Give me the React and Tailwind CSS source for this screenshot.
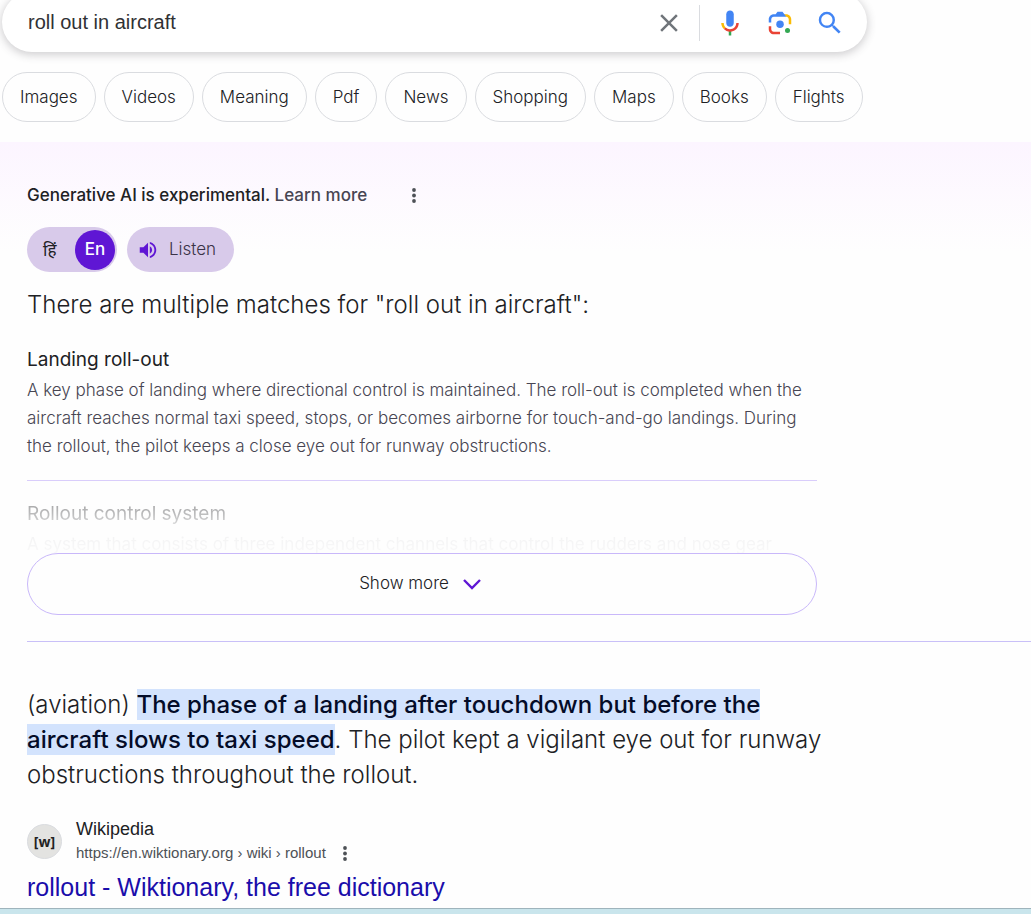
import React from "react";

const filters = ["Images", "Videos", "Meaning", "Pdf", "News", "Shopping", "Maps", "Books", "Flights"];

function CloseIcon() {
  return (
    <svg viewBox="0 0 24 24" className="size-[30px]" fill="#70757a" aria-hidden="true">
      <path d="M19 6.41L17.59 5 12 10.59 6.41 5 5 6.41 10.59 12 5 17.59 6.41 19 12 13.41 17.59 19 19 17.59 13.41 12z" />
    </svg>
  );
}

function MicIcon() {
  return (
    <svg viewBox="0 0 24 24" className="size-[30px]" aria-hidden="true">
      <path fill="#4285f4" d="M12 15c1.66 0 3-1.31 3-2.97V4.97C15 3.31 13.66 2 12 2S9 3.31 9 4.97v7.06C9 13.69 10.34 15 12 15z" />
      <path fill="#34a853" d="M11 18.08h2V22h-2z" />
      <path fill="#fbbc04" d="M7.05 16.87C5.78 15.59 5 13.87 5 12h2c0 1.37.56 2.6 1.46 3.5z" />
      <path fill="#ea4335" d="M12 16.93a4.97 4.97 0 0 1-3.54-1.43l-1.41 1.37C8.32 18.14 10.03 19 12 19c3.87 0 7-3.13 7-7h-2c0 2.8-2.24 4.93-5 4.93z" />
    </svg>
  );
}

function LensIcon() {
  return (
    <svg viewBox="0 0 192 192" className="size-[30px]" aria-hidden="true">
      <circle fill="#34a853" cx="144.07" cy="144" r="16" />
      <circle fill="#4285f4" cx="96.07" cy="104" r="24" />
      <path fill="#ea4335" d="M24 135.2c0 18.11 14.69 32.8 32.8 32.8H96v-16l-40.1-.1c-8.8 0-15.9-8.19-15.9-17.9v-18H24v19.2z" />
      <path fill="#fbbc04" d="M168 72.8c0-18.11-14.69-32.8-32.8-32.8H116l20 16c8.8 0 16 8.29 16 18v30h16V72.8z" />
      <path fill="#4285f4" d="M112 24l-32 0-12 16H56.8C38.69 40 24 54.69 24 72.8V92h16V74c0-9.71 7.2-18 16-18h80L124 40z" />
    </svg>
  );
}

function SearchIcon() {
  return (
    <svg viewBox="0 0 24 24" className="size-[30px]" fill="#4285f4" aria-hidden="true">
      <path d="M15.5 14h-.79l-.28-.27A6.471 6.471 0 0 0 16 9.5 6.5 6.5 0 1 0 9.5 16c1.61 0 3.09-.59 4.23-1.57l.27.28v.79l5 4.99L20.49 19l-4.99-5zm-6 0C7.01 14 5 11.99 5 9.5S7.01 5 9.5 5 14 7.01 14 9.5 11.99 14 9.5 14z" />
    </svg>
  );
}

function DotsIcon() {
  return (
    <svg viewBox="0 0 6 18" className="h-[18px] w-[6px]" fill="#4d5156" aria-hidden="true">
      <circle cx="3" cy="4" r="1.9" />
      <circle cx="3" cy="9.5" r="1.9" />
      <circle cx="3" cy="15" r="1.9" />
    </svg>
  );
}

function SpeakerIcon() {
  return (
    <svg viewBox="0 0 24 24" className="size-[22px]" fill="#5f16d4" aria-hidden="true">
      <path d="M3 9v6h4l5 5V4L7 9H3zm13.5 3A4.5 4.5 0 0 0 14 7.97v8.05A4.5 4.5 0 0 0 16.5 12zM14 3.23v2.06c2.89.86 5 3.54 5 6.71s-2.11 5.85-5 6.71v2.06c4.01-.91 7-4.49 7-8.77s-2.99-7.86-7-8.77z" />
    </svg>
  );
}

function WiktionaryLogo() {
  return (
    <span className="flex size-[35px] shrink-0 items-center justify-center rounded-full border border-[#dadce0] bg-[#e3e3e1] font-['Open_Sans',sans-serif] text-[14px] font-bold text-[#222222]" aria-hidden="true">
      [w]
    </span>
  );
}

export default function App() {
  return (
    <div className="overflow-x-hidden bg-[#fefefe] font-['Inter','Noto_Sans',sans-serif] font-light text-[#202124]">
      <header className="overflow-hidden pb-[20px] pl-[2px]">
        <form
          role="search"
          onSubmit={(e) => e.preventDefault()}
          className="-mt-2 flex h-[60px] max-w-[865px] items-center rounded-full bg-white pr-[22px] pl-[26px] shadow-[0_2px_8px_1px_rgba(64,60,67,0.24)]"
        >
          <input
            type="text"
            aria-label="Search"
            defaultValue="roll out in aircraft"
            className="min-w-0 flex-1 bg-transparent font-['Liberation_Sans',Arial,sans-serif] text-[20px] text-[#303134] outline-none"
          />
          <div className="flex items-center pt-[2px]">
            <button type="button" aria-label="Clear"><CloseIcon /></button>
            <span className="mx-[15px] h-[36px] w-px bg-[#dadce0]" />
            <div className="flex items-center gap-[20px]">
              <button type="button" aria-label="Search by voice"><MicIcon /></button>
              <button type="button" aria-label="Search by image"><LensIcon /></button>
              <button type="submit" aria-label="Search"><SearchIcon /></button>
            </div>
          </div>
        </form>
        <nav className="mt-[20px] flex flex-wrap gap-2">
          {filters.map((f) => (
            <a key={f} href="#" className="flex h-[50px] items-center rounded-full border border-[#dadce0] px-[17px] pt-[2px] text-[17px]">
              {f}
            </a>
          ))}
        </nav>
      </header>

      <main>
        <section className="bg-linear-to-b from-[#fcf5ff] to-[#fefefe] to-[110px] pt-[41px] pl-[27px]">
          <div className="flex items-center gap-[44px]">
            <p className="text-[17px] leading-[24px] font-medium">
              Generative AI is experimental. <a href="#" className="text-[#474552]">Learn more</a>
            </p>
            <button type="button" aria-label="More options"><DotsIcon /></button>
          </div>

          <div className="mt-[20px] flex gap-[10px] text-[17px]">
            <div className="flex h-[45px] w-[90px] items-center justify-between rounded-full bg-[#d8caea] pr-[2px] pl-[16px]">
              <button type="button" lang="hi" className="pt-[2px] font-normal">हिं</button>
              <button type="button" className="size-[40px] rounded-full bg-[#5f16d4] font-medium text-white">En</button>
            </div>
            <button type="button" className="flex h-[45px] items-center gap-[10px] rounded-full bg-[#d8caea] pr-[18px] pl-[10px] text-[#3b3347]">
              <SpeakerIcon />
              Listen
            </button>
          </div>

          <h2 className="mt-[16px] text-[24px] leading-[34px]">There are multiple matches for "roll out in aircraft":</h2>

          <div className="max-w-[790px]">
            <article className="mt-[24px] border-b border-[#d9cdfb] pb-[20px]">
              <h3 className="text-[19px] leading-[28px] font-normal">Landing roll-out</h3>
              <p className="mt-[2px] text-[17px] leading-[28px] font-[340] text-[#474552]">
                A key phase of landing where directional control is maintained. The roll-out is completed when the
                aircraft reaches normal taxi speed, stops, or becomes airborne for touch-and-go landings. During
                the rollout, the pilot keeps a close eye out for runway obstructions.
              </p>
            </article>
            <article className="h-[72px] overflow-hidden mask-[linear-gradient(to_bottom,rgba(0,0,0,0.6)_0%,rgba(0,0,0,0.3)_45%,rgba(0,0,0,0.06)_75%,rgba(0,0,0,0.03)_100%)] pt-[19px]">
              <h3 className="text-[19px] leading-[28px] font-normal">Rollout control system</h3>
              <p className="mt-[2px] text-[17px] leading-[28px] font-normal text-[#474552]">
                A system that consists of three independent channels that control the rudders and nose gear
              </p>
            </article>
            <button type="button" className="flex h-[62px] w-full items-center justify-center gap-[14px] rounded-full border border-[#c9b8fa] pr-[4px] text-[17px]">
              Show more
              <svg viewBox="0 0 18 12" className="h-[12px] w-[18px]" fill="none" stroke="#5f16d4" strokeWidth="2.4" aria-hidden="true">
                <path d="M1 2l8 8 8-8" />
              </svg>
            </button>
          </div>
          <hr className="mt-[26px] border-t border-[#c9c0f8]" />
        </section>

        <section className="pt-[45px] pl-[27px]">
          <p className="max-w-[810px] text-[24px] leading-[35px]">
            (aviation) <mark className="bg-[#d3e3fd] py-px font-medium text-[#040c28]">The phase of a landing after touchdown but before the aircraft slows to taxi speed</mark>. The pilot kept a vigilant eye out for runway obstructions throughout the rollout.
          </p>
          <div className="mt-[25px] flex items-center gap-[14px] font-['Liberation_Sans',Arial,sans-serif]">
            <WiktionaryLogo />
            <div>
              <p className="text-[18px] leading-[24px]">Wikipedia</p>
              <div className="flex items-center gap-[16px]">
                <cite className="text-[15px] leading-[24px] text-[#4d5156] not-italic">https://en.wiktionary.org › wiki › rollout</cite>
                <button type="button" aria-label="About this result"><DotsIcon /></button>
              </div>
            </div>
          </div>
          <h3 className="mt-[6px] pb-[5px] font-['Liberation_Sans',Arial,sans-serif] text-[25px] leading-[32px]">
            <a href="#" className="text-[#1a0dab]">rollout - Wiktionary, the free dictionary</a>
          </h3>
        </section>
      </main>
      <footer className="h-[6px] border-t border-[#9fb4bc] bg-[#c9e5ec]" />
    </div>
  );
}
